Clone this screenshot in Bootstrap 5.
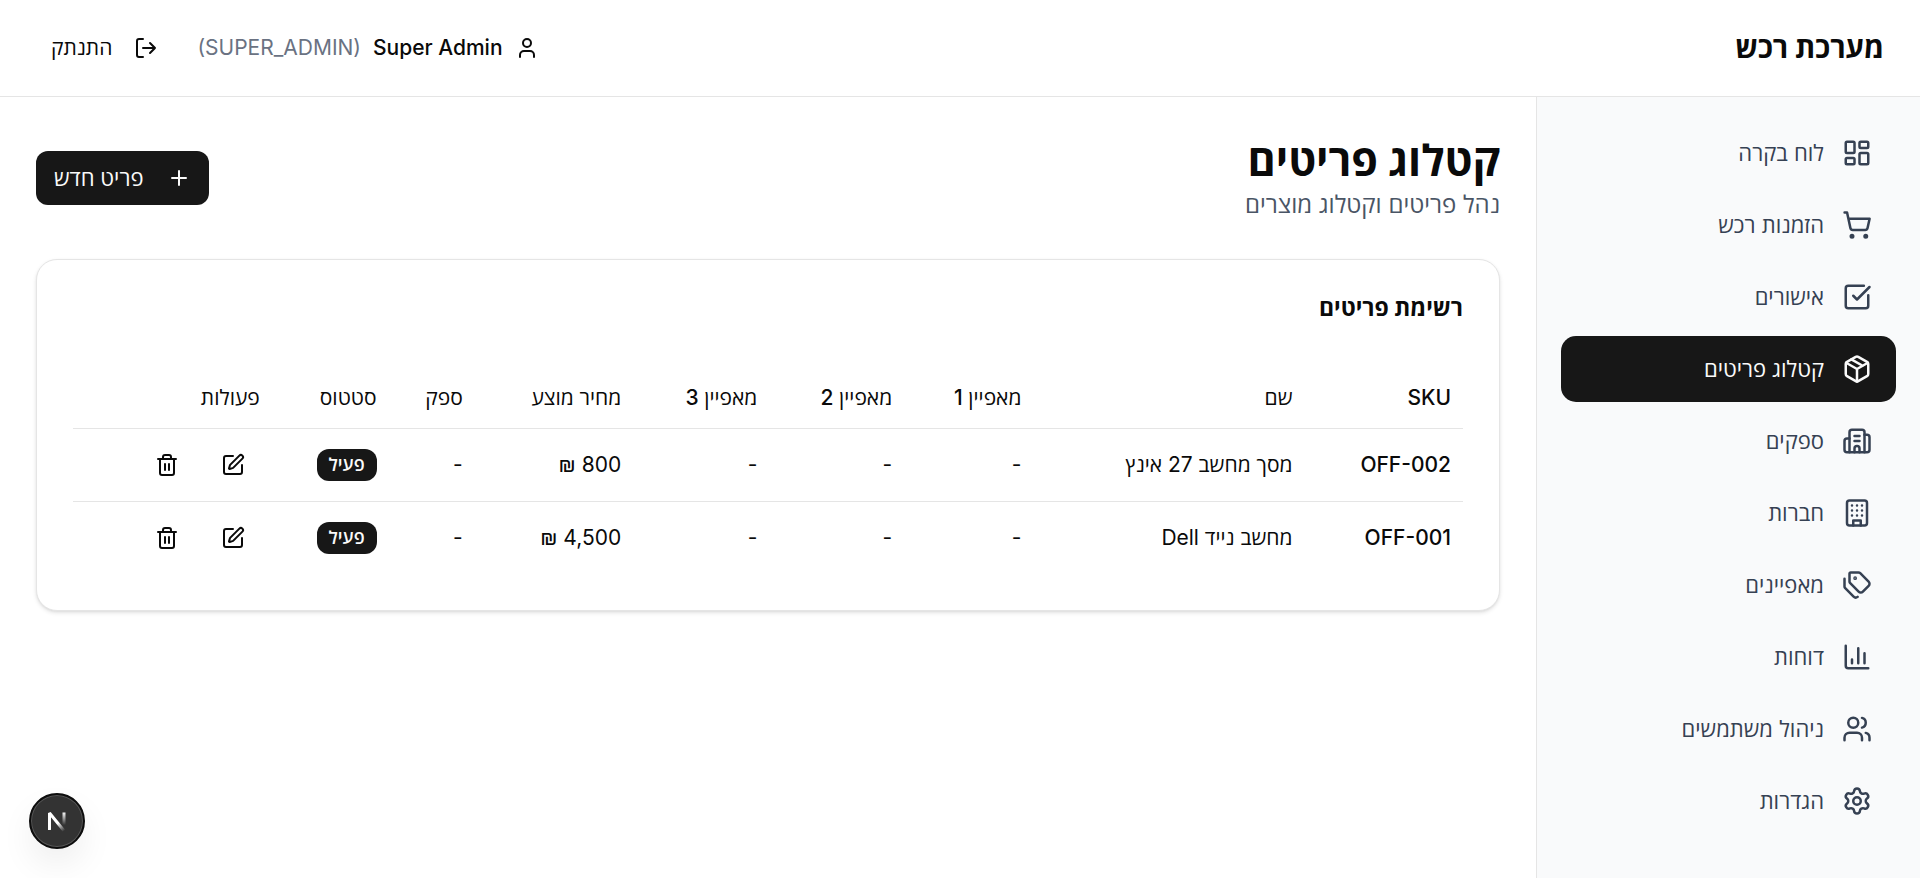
<!DOCTYPE html>
<html lang="he" dir="rtl">
<head>
<meta charset="utf-8">
<meta name="viewport" content="width=device-width, initial-scale=1">
<title>מערכת רכש</title>
<link rel="stylesheet" href="https://cdn.jsdelivr.net/npm/bootstrap@5.3.0/dist/css/bootstrap.min.css">
<style>
  body { font-family: Inter, "Open Sans", sans-serif; font-size: 21px; line-height: 30px; color: #0a0a0a; background: #fff; }
  svg { flex-shrink: 0; fill: none; stroke: currentColor; stroke-width: 2; stroke-linecap: round; stroke-linejoin: round; }
  .ico { width: 24px; height: 24px; }
  .ico-nav { width: 30px; height: 30px; }
  .topbar { min-height: 97px; padding: 0 36px; border-bottom: 1px solid #e5e5e5; }
  .brand { font-size: 29px; line-height: 42px; font-weight: 700; margin: 0; }
  .user-info, .row-actions { gap: 12px; }
  .user-name { font-weight: 500; }
  .role { color: #6a7282; }
  .btn { --bs-btn-font-size: 22px; --bs-btn-line-height: 30px; --bs-btn-font-weight: 500; --bs-btn-border-width: 0; --bs-btn-border-radius: 12px; --bs-btn-color: #0a0a0a; display: inline-flex; align-items: center; justify-content: center; }
  .btn-logout { --bs-btn-font-size: 21px; --bs-btn-padding-x: 15px; gap: 22px; height: 48px; }
  .btn-new { --bs-btn-padding-x: 18px; gap: 24px; height: 54px; --bs-btn-color: #fafafa; --bs-btn-bg: #171717; --bs-btn-hover-color: #fafafa; --bs-btn-hover-bg: #2e2e2e; }
  .btn-row { --bs-btn-padding-x: 15px; --bs-btn-padding-y: 0; height: 48px; }
  .sidebar { flex: 0 0 384px; background: #f9fafb; border-left: 1px solid #e5e5e5; padding: 23px 24px; }
  .sidebar .nav { gap: 6px; }
  .sidebar .nav-link { display: flex; align-items: center; gap: 18px; height: 66px; padding: 0 24px; border-radius: 15px; font-size: 22px; color: #364153; }
  .sidebar .nav-link.active { background: #171717; color: #fafafa; font-weight: 500; }
  .content { min-width: 0; padding: 36px; }
  h1 { font-size: 43px; line-height: 54px; font-weight: 700; margin: 0; }
  .subtitle { font-size: 24px; line-height: 36px; color: #4a5565; margin: 0; }
  .card { margin-top: 36px; padding: 36px; border: 1px solid #e5e5e5; border-radius: 21px; gap: 48px; box-shadow: 0 2px 4px rgba(0,0,0,.1), 0 1px 3px -1px rgba(0,0,0,.1); }
  h2 { font-size: 23px; line-height: 24px; font-weight: 700; margin: 0; }
  .table { --bs-table-color: #0a0a0a; --bs-table-bg: transparent; --bs-border-color: #e5e5e5; table-layout: fixed; min-width: 1100px; border-collapse: separate; border-spacing: 0; }
  .table > :not(caption) > * > * { padding: 0 12px; vertical-align: middle; text-align: right; white-space: nowrap; border-bottom: 1px solid #e5e5e5; }
  .table th { font-weight: 500; }
  .table > thead > tr > th { height: 61px; }
  .table > tbody > tr > * { height: 73px; }
  .table > tbody > tr:last-child > * { border-bottom: 0; height: 72px; }
  .badge { font-size: 18px; line-height: 24px; font-weight: 600; padding: 4px 12px; border-radius: 12px; background: #171717; color: #fafafa; vertical-align: middle; }
  .dev-button { left: 29px; bottom: 29px; width: 56px; height: 56px; padding: 0; border: 2px solid #0d0d0d; background: #333; color: #fff; box-shadow: inset 0 0 0 1px #555, 0 16px 36px -4px rgba(0,0,0,.09); }
</style>
</head>
<body class="d-flex flex-column min-vh-100">
<header class="topbar d-flex align-items-center justify-content-between">
  <p class="brand">מערכת רכש</p>
  <div class="d-flex align-items-center gap-4">
    <div class="user-info d-flex align-items-center">
      <svg class="ico" viewBox="0 0 24 24"><path d="M19 21v-2a4 4 0 0 0-4-4H9a4 4 0 0 0-4 4v2"/><circle cx="12" cy="7" r="4"/></svg>
      <span class="user-name">Super Admin</span>
      <span class="role" dir="ltr">(SUPER_ADMIN)</span>
    </div>
    <button type="button" class="btn btn-logout">
      <svg class="ico" viewBox="0 0 24 24"><path d="m16 17 5-5-5-5M21 12H9M9 21H5a2 2 0 0 1-2-2V5a2 2 0 0 1 2-2h4"/></svg>
      התנתק
    </button>
  </div>
</header>
<div class="d-flex flex-grow-1">
  <aside class="sidebar">
    <nav class="nav flex-column">
      <a class="nav-link" href="#"><svg class="ico-nav" viewBox="0 0 24 24"><rect width="7" height="9" x="3" y="3" rx="1"/><rect width="7" height="5" x="14" y="3" rx="1"/><rect width="7" height="9" x="14" y="12" rx="1"/><rect width="7" height="5" x="3" y="16" rx="1"/></svg>לוח בקרה</a>
      <a class="nav-link" href="#"><svg class="ico-nav" viewBox="0 0 24 24"><circle cx="8" cy="21" r="1"/><circle cx="19" cy="21" r="1"/><path d="M2.05 2.05h2l2.66 12.42a2 2 0 0 0 2 1.58h9.78a2 2 0 0 0 1.95-1.57l1.65-7.43H5.12"/></svg>הזמנות רכש</a>
      <a class="nav-link" href="#"><svg class="ico-nav" viewBox="0 0 24 24"><path d="M21 10.5V19a2 2 0 0 1-2 2H5a2 2 0 0 1-2-2V5a2 2 0 0 1 2-2h12.5"/><path d="m9 11 3 3L22 4"/></svg>אישורים</a>
      <a class="nav-link active" href="#" aria-current="page"><svg class="ico-nav" viewBox="0 0 24 24"><path d="M11 21.73a2 2 0 0 0 2 0l7-4A2 2 0 0 0 21 16V8a2 2 0 0 0-1-1.73l-7-4a2 2 0 0 0-2 0l-7 4A2 2 0 0 0 3 8v8a2 2 0 0 0 1 1.73z"/><path d="M12 22V12M3.29 7 12 12l8.71-5M7.5 4.27l9 5.15"/></svg>קטלוג פריטים</a>
      <a class="nav-link" href="#"><svg class="ico-nav" viewBox="0 0 24 24"><path d="M10 12h4M10 8h4M14 21v-3a2 2 0 0 0-4 0v3"/><path d="M6 10H4a2 2 0 0 0-2 2v7a2 2 0 0 0 2 2h16a2 2 0 0 0 2-2V9a2 2 0 0 0-2-2h-2"/><path d="M6 21V5a2 2 0 0 1 2-2h8a2 2 0 0 1 2 2v16"/></svg>ספקים</a>
      <a class="nav-link" href="#"><svg class="ico-nav" viewBox="0 0 24 24"><rect width="16" height="20" x="4" y="2" rx="2"/><path d="M9 22v-4h6v4M8 6h.01M16 6h.01M12 6h.01M12 10h.01M12 14h.01M16 10h.01M16 14h.01M8 10h.01M8 14h.01"/></svg>חברות</a>
      <a class="nav-link" href="#"><svg class="ico-nav" viewBox="0 0 24 24"><path d="M13.172 2a2 2 0 0 1 1.414.586l6.71 6.71a2.4 2.4 0 0 1 0 3.408l-4.592 4.592a2.4 2.4 0 0 1-3.408 0l-6.71-6.71A2 2 0 0 1 6 9.172V3a1 1 0 0 1 1-1z"/><path d="M2 7v6.172a2 2 0 0 0 .586 1.414l6.71 6.71a2.4 2.4 0 0 0 3.191.193"/><circle cx="10.5" cy="6.5" r=".5" fill="currentColor"/></svg>מאפיינים</a>
      <a class="nav-link" href="#"><svg class="ico-nav" viewBox="0 0 24 24"><path d="M3 3v16a2 2 0 0 0 2 2h16M18 17V9M13 17V5M8 17v-3"/></svg>דוחות</a>
      <a class="nav-link" href="#"><svg class="ico-nav" viewBox="0 0 24 24"><path d="M16 21v-2a4 4 0 0 0-4-4H6a4 4 0 0 0-4 4v2M16 3.128a4 4 0 0 1 0 7.744M22 21v-2a4 4 0 0 0-3-3.87"/><circle cx="9" cy="7" r="4"/></svg>ניהול משתמשים</a>
      <a class="nav-link" href="#"><svg class="ico-nav" viewBox="0 0 24 24"><path d="M9.671 4.136a2.34 2.34 0 0 1 4.659 0 2.34 2.34 0 0 0 3.319 1.915 2.34 2.34 0 0 1 2.33 4.033 2.34 2.34 0 0 0 0 3.831 2.34 2.34 0 0 1-2.33 4.033 2.34 2.34 0 0 0-3.319 1.915 2.34 2.34 0 0 1-4.659 0 2.34 2.34 0 0 0-3.32-1.915 2.34 2.34 0 0 1-2.33-4.033 2.34 2.34 0 0 0 0-3.831A2.34 2.34 0 0 1 6.35 6.051a2.34 2.34 0 0 0 3.319-1.915"/><circle cx="12" cy="12" r="3"/></svg>הגדרות</a>
    </nav>
  </aside>
  <main class="content flex-grow-1">
    <div class="d-flex align-items-center justify-content-between">
      <div>
        <h1>קטלוג פריטים</h1>
        <p class="subtitle">נהל פריטים וקטלוג מוצרים</p>
      </div>
      <button type="button" class="btn btn-new"><svg class="ico" viewBox="0 0 24 24"><path d="M5 12h14M12 5v14"/></svg>פריט חדש</button>
    </div>
    <section class="card">
      <h2>רשימת פריטים</h2>
      <div class="table-responsive">
        <table class="table mb-0">
          <colgroup><col style="width:11.4%"><col style="width:19.5%"><col style="width:9.3%"><col style="width:9.7%"><col style="width:9.8%"><col style="width:11.4%"><col style="width:6.2%"><col style="width:8.4%"><col style="width:14.3%"></colgroup>
          <thead>
            <tr><th scope="col">SKU</th><th scope="col">שם</th><th scope="col">מאפיין 1</th><th scope="col">מאפיין 2</th><th scope="col">מאפיין 3</th><th scope="col">מחיר מוצע</th><th scope="col">ספק</th><th scope="col">סטטוס</th><th scope="col">פעולות</th></tr>
          </thead>
          <tbody>
            <tr>
              <th scope="row">OFF-002</th><td>מסך מחשב 27 אינץ</td><td>-</td><td>-</td><td>-</td><td>800 ₪</td><td>-</td><td><span class="badge">פעיל</span></td>
              <td><div class="row-actions d-flex">
                <button type="button" class="btn btn-row" aria-label="עריכה"><svg class="ico" viewBox="0 0 24 24"><path d="M12 3H5a2 2 0 0 0-2 2v14a2 2 0 0 0 2 2h14a2 2 0 0 0 2-2v-7"/><path d="M18.375 2.625a1 1 0 0 1 3 3l-9.013 9.014a2 2 0 0 1-.853.505l-2.873.84a.5.5 0 0 1-.62-.62l.84-2.873a2 2 0 0 1 .506-.852z"/></svg></button>
                <button type="button" class="btn btn-row" aria-label="מחיקה"><svg class="ico" viewBox="0 0 24 24"><path d="M10 11v6M14 11v6M19 6v14a2 2 0 0 1-2 2H7a2 2 0 0 1-2-2V6M3 6h18M8 6V4a2 2 0 0 1 2-2h4a2 2 0 0 1 2 2v2"/></svg></button>
              </div></td>
            </tr>
            <tr>
              <th scope="row">OFF-001</th><td>מחשב נייד Dell</td><td>-</td><td>-</td><td>-</td><td>4,500 ₪</td><td>-</td><td><span class="badge">פעיל</span></td>
              <td><div class="row-actions d-flex">
                <button type="button" class="btn btn-row" aria-label="עריכה"><svg class="ico" viewBox="0 0 24 24"><path d="M12 3H5a2 2 0 0 0-2 2v14a2 2 0 0 0 2 2h14a2 2 0 0 0 2-2v-7"/><path d="M18.375 2.625a1 1 0 0 1 3 3l-9.013 9.014a2 2 0 0 1-.853.505l-2.873.84a.5.5 0 0 1-.62-.62l.84-2.873a2 2 0 0 1 .506-.852z"/></svg></button>
                <button type="button" class="btn btn-row" aria-label="מחיקה"><svg class="ico" viewBox="0 0 24 24"><path d="M10 11v6M14 11v6M19 6v14a2 2 0 0 1-2 2H7a2 2 0 0 1-2-2V6M3 6h18M8 6V4a2 2 0 0 1 2-2h4a2 2 0 0 1 2 2v2"/></svg></button>
              </div></td>
            </tr>
          </tbody>
        </table>
      </div>
    </section>
  </main>
</div>
<button type="button" class="dev-button position-fixed rounded-circle d-flex align-items-center justify-content-center" aria-label="Next.js">
  <svg width="24" height="24" viewBox="0 0 24 24">
    <defs>
      <linearGradient id="diag" gradientUnits="userSpaceOnUse" x1="13" y1="14" x2="19" y2="22"><stop stop-color="#fff"/><stop offset="1" stop-color="#fff" stop-opacity="0"/></linearGradient>
      <linearGradient id="stem" gradientUnits="userSpaceOnUse" x1="19" y1="3" x2="19" y2="16"><stop stop-color="#fff"/><stop offset="1" stop-color="#fff" stop-opacity="0"/></linearGradient>
    </defs>
    <path d="M4.500 21V4L20 23" stroke="url(#diag)" stroke-linecap="butt" stroke-linejoin="bevel" stroke-width="3"/>
    <path d="M19 3.500V17" stroke="url(#stem)" stroke-linecap="butt" stroke-width="3"/>
  </svg>
</button>
<script src="https://cdn.jsdelivr.net/npm/bootstrap@5.3.0/dist/js/bootstrap.bundle.min.js"></script>
</body>
</html>
